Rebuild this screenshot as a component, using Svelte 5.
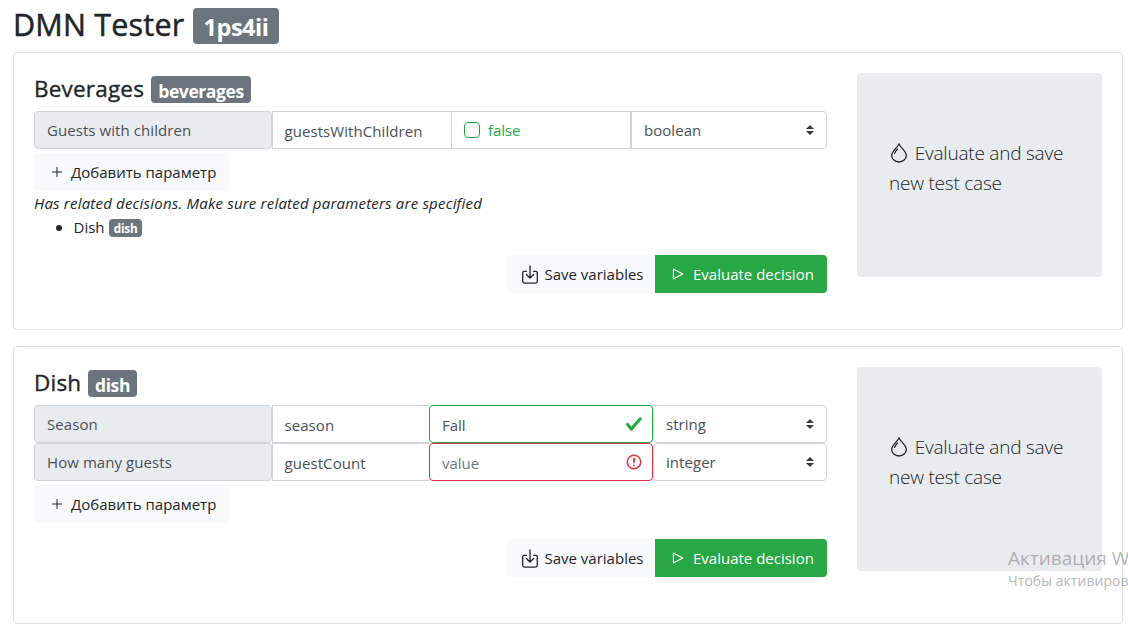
<script>
  const decisions = [
    {
      name: 'Beverages',
      id: 'beverages',
      kind: 'beverages',
      params: [{ label: 'Guests with children', key: 'guestsWithChildren', value: 'false', type: 'boolean', state: 'check' }],
      related: [{ name: 'Dish', id: 'dish' }]
    },
    {
      name: 'Dish',
      id: 'dish',
      kind: 'dish',
      params: [
        { label: 'Season', key: 'season', value: 'Fall', type: 'string', state: 'valid' },
        { label: 'How many guests', key: 'guestCount', value: 'value', type: 'integer', state: 'invalid' }
      ],
      related: []
    }
  ];
</script>

<main>
  <h1><span class="title">DMN Tester</span><span class="badge">1ps4ii</span></h1>

  {#each decisions as d}
    <section class="card {d.kind}">
      <div class="left">
        <h2><span class="name">{d.name}</span><span class="badge">{d.id}</span></h2>
        {#each d.params as p}
          <div class="row">
            <div class="cell label"><span>{p.label}</span></div>
            <div class="cell key"><span>{p.key}</span></div>
            <div class="cell value {p.state}">
              {#if p.state === 'check'}<i class="box"></i>{/if}
              <span>{p.value}</span>
              {#if p.state === 'valid'}
                <svg width="18" height="18" viewBox="0 0 8 8"><path fill="#28a745" d="M2.3 6.73L.6 4.53c-.4-1.04.46-1.4 1.1-.8l1.1 1.4 3.4-3.8c.6-.63 1.6-.27 1.2.7l-4 4.6c-.43.5-.8.4-1.1.1z" /></svg>
              {:else if p.state === 'invalid'}
                <svg width="18" height="18" viewBox="0 0 12 12" fill="none" stroke="#dc3545"><circle cx="6" cy="6" r="4.5" /><path stroke-linejoin="round" d="M5.8 3.6h.4L6 6.5z" /><circle cx="6" cy="8.2" r=".6" fill="#dc3545" stroke="none" /></svg>
              {/if}
            </div>
            <div class="cell type">
              <span>{p.type}</span>
              <svg width="8" height="10" viewBox="0 0 4 5"><path fill="#343a40" d="M2 0L0 2h4zm0 5L0 3h4z" /></svg>
            </div>
          </div>
        {/each}
        <button class="add">
          <svg width="16" height="16" viewBox="0 0 16 16" fill="none" stroke="currentColor" stroke-linecap="round"><path d="M8 3.5v9M3.5 8h9" /></svg>
          <span>Добавить параметр</span>
        </button>
        {#if d.related.length}
          <p class="hint">Has related decisions. Make sure related parameters are specified</p>
          <ul>
            {#each d.related as r}<li><i class="dot"></i><span>{r.name}</span><span class="badge">{r.id}</span></li>{/each}
          </ul>
        {/if}
        <div class="actions">
          <button class="save">
            <svg width="18" height="20" viewBox="0 0 18 20" fill="none" stroke="currentColor" stroke-width="1.3" stroke-linecap="round" stroke-linejoin="round"><path d="M5.4 6.3H3.2a1.5 1.5 0 0 0-1.5 1.5v8.5a1.8 1.8 0 0 0 1.8 1.8h11a1.8 1.8 0 0 0 1.8-1.8V7.8a1.5 1.5 0 0 0-1.5-1.5h-2.2M9 .8v12M5.4 9.5L9 13l3.6-3.5" /></svg>
            <span>Save variables</span>
          </button>
          <button class="run">
            <svg width="12" height="12" viewBox="0 0 12 12" fill="none" stroke="currentColor" stroke-width="1.1" stroke-linejoin="round"><path d="M1.4 1v10L10.8 6z" /></svg>
            <span>Evaluate decision</span>
          </button>
        </div>
      </div>
      <aside>
        <p>
          <svg width="18" height="20" viewBox="0 0 18 20" fill="none" stroke="currentColor" stroke-width="1.3" stroke-linecap="round"><path d="M9 1C7 5.2 1.7 8 1.7 12.4a7.3 6.6 0 0 0 14.6 0C16.3 8 11 5.2 9 1z" /><path d="M7.4 6.2C6 7.8 5 8.8 4.6 10.4" /></svg>
          <span>Evaluate and save</span><br /><span>new test case</span>
        </p>
      </aside>
    </section>
  {/each}

  <div class="watermark"><div class="big">Активация W</div><div class="small">Чтобы активиров</div></div>
</main>

<style>
  :global(body) { overflow: hidden; background: #fff; }
  * { box-sizing: border-box; }
  main { position: relative; width: 1128px; height: 626px; overflow: hidden; padding: 8px 5px 0 13px; font: 15px/24px "Open Sans", "Noto Sans", sans-serif; color: #212529; }
  span { white-space: nowrap; }
  svg { display: block; flex: none; }
  h1, h2, p, ul { margin: 0; padding: 0; }
  h1 { display: flex; height: 36px; margin-bottom: 8px; font-size: 30.5px; font-weight: 500; line-height: 33px; }
  .title { width: 180px; letter-spacing: .2px; -webkit-text-stroke: .5px currentColor; }
  .name { -webkit-text-stroke: .35px currentColor; letter-spacing: .2px; }
  .badge { background: #6c757d; color: #fff; border-radius: 4px; font-weight: 700; text-align: center; }
  h1 .badge { width: 86px; font-size: 23.5px; line-height: 39px; letter-spacing: -.5px; }
  .card { display: flex; gap: 30px; width: 1110px; height: 278px; padding: 20px; border: 1px solid #dfdfdf; border-radius: 4px; margin-bottom: 16px; }
  .left { width: 793px; display: flex; flex-direction: column; }
  h2 { display: flex; align-items: flex-start; height: 27px; margin: 3px 0 8px; font-size: 22.5px; font-weight: 500; line-height: 26px; }
  .beverages .name { width: 117px; }
  .dish .name { width: 54px; }
  h2 .badge { height: 27px; font-size: 17.5px; line-height: 30px; letter-spacing: -.4px; }
  .beverages h2 .badge { width: 100px; }
  .dish h2 .badge { width: 49px; }
  .row { display: grid; height: 38px; flex: none; }
  .beverages .row { grid-template-columns: 238px 179px 180px 196px; }
  .dish .row { grid-template-columns: 238px 157px 224px 174px; }
  .cell { display: flex; align-items: center; padding: 0 12px; border: 1px solid #ced4da; color: #495057; min-width: 0; }
  .label { background: #e9ecef; border-radius: 4px; letter-spacing: .07px; }
  .key { border-right: 0; padding-left: 11.5px; }
  .key span { position: relative; top: 1px; letter-spacing: .07px; }
  .value svg { margin-left: auto; margin-right: -3px; }
  .value.check { color: #28a745; letter-spacing: -.1px; }
  .box { width: 16px; height: 16px; border: 1px solid #28a745; border-radius: 4px; margin-right: 8px; }
  .valid, .invalid { border-radius: 4px; }
  .valid span, .invalid span { position: relative; top: 1px; }
  .valid { border-color: #28a745; }
  .invalid { border-color: #dc3545; color: #6c757d; }
  .type { border-radius: 0 4px 4px 0; letter-spacing: .05px; }
  .type svg { margin-left: auto; }
  .dish .type { border-radius: 4px; }
  button { display: flex; align-items: center; height: 38px; border: 0; border-radius: 4px; padding: 0; font: inherit; color: #212529; background: #f8f9fa; }
  .add { width: 195px; flex: none; margin-top: 4px; padding-left: 15px; gap: 6px; }
  .hint { font-style: italic; height: 24px; white-space: nowrap; letter-spacing: .2px; }
  ul { list-style: none; height: 24px; }
  li { display: flex; align-items: center; padding-left: 22px; }
  .dot { width: 6px; height: 6px; border-radius: 50%; background: #212529; margin: 1px 11.5px 0 0; }
  li .badge { width: 33px; height: 18px; margin: 1px 0 0 4.5px; font-size: 11.7px; line-height: 19px; letter-spacing: -.2px; }
  .actions { display: flex; margin: 16px 0 0 473px; }
  .save { width: 148px; border-radius: 4px 0 0 4px; padding-left: 14px; gap: 5.5px; }
  .save svg { position: relative; top: 1px; }
  .run { width: 172px; border-radius: 0 4px 4px 0; background: #28a745; color: #fff; padding-left: 17px; gap: 9px; }
  aside { width: 245px; height: 204px; border-radius: 4px; background: #e9ecef; padding: 65px 32px; font-size: 19px; font-weight: 300; line-height: 30px; letter-spacing: -.22px; }
  aside svg { display: inline-block; vertical-align: -3px; margin: 0 2px 0 1px; }
  aside p { white-space: nowrap; }
  .watermark { position: absolute; left: 1008px; top: 546px; color: rgba(120, 120, 120, .55); white-space: nowrap; }
  .big { font-size: 19px; line-height: 25px; }
  .small { font-size: 14px; line-height: 20px; letter-spacing: .05px; }
</style>
